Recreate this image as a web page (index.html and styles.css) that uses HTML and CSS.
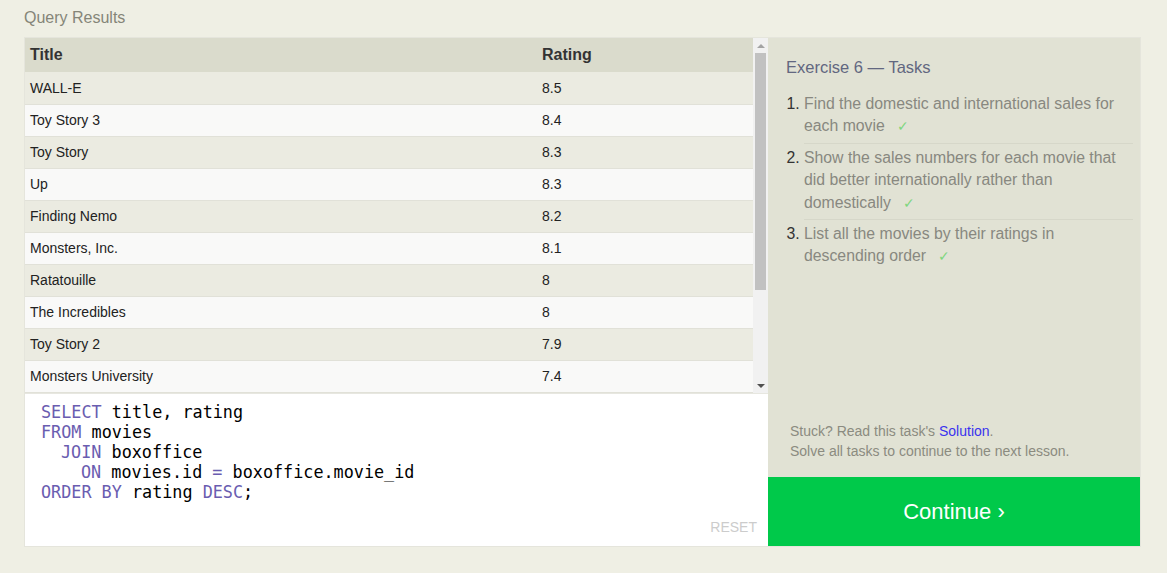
FILE: index.html
```html
<!DOCTYPE html>
<html>
<head>
<meta charset="utf-8">
<link rel="stylesheet" href="styles.css">
</head>
<body>
<div class="page">
  <div class="caption">Query Results</div>
  <div class="box">
    <div class="left">
      <div class="results">
        <div class="table-wrap">
          <table class="tbl">
            <thead><tr><th class="c1">Title</th><th>Rating</th></tr></thead>
            <tbody>
              <tr><td>WALL-E</td><td>8.5</td></tr>
              <tr><td>Toy Story 3</td><td>8.4</td></tr>
              <tr><td>Toy Story</td><td>8.3</td></tr>
              <tr><td>Up</td><td>8.3</td></tr>
              <tr><td>Finding Nemo</td><td>8.2</td></tr>
              <tr><td>Monsters, Inc.</td><td>8.1</td></tr>
              <tr><td>Ratatouille</td><td>8</td></tr>
              <tr><td>The Incredibles</td><td>8</td></tr>
              <tr><td>Toy Story 2</td><td>7.9</td></tr>
              <tr><td>Monsters University</td><td>7.4</td></tr>
              <tr><td>Cars</td><td>7.3</td></tr>
              <tr><td>A Bug's Life</td><td>7.2</td></tr>
              <tr><td>Brave</td><td>7.2</td></tr>
              <tr><td>Cars 2</td><td>6.4</td></tr>
            </tbody>
          </table>
        </div>
        <div class="scrollbar">
          <div class="arrow up"></div>
          <div class="track"><div class="thumb"></div></div>
          <div class="arrow down"></div>
        </div>
      </div>
      <div class="editor">
        <div class="code">
          <div class="ln"><span class="kw">SELECT</span> title, rating</div>
          <div class="ln"><span class="kw">FROM</span> movies</div>
          <div class="ln ind1"><span class="kw">JOIN</span> boxoffice</div>
          <div class="ln ind2"><span class="kw">ON</span> movies.id <span class="kw">=</span> boxoffice.movie_id</div>
          <div class="ln"><span class="kw">ORDER BY</span> rating <span class="kw">DESC</span>;</div>
        </div>
        <div class="reset">RESET</div>
      </div>
    </div>
    <div class="right">
      <div class="tasks">
        <h2 class="heading">Exercise 6 — Tasks</h2>
        <ol class="list">
          <li>Find the domestic and international sales for each movie <span class="check">✓</span></li>
          <li>Show the sales numbers for each movie that did better internationally rather than domestically <span class="check">✓</span></li>
          <li class="last">List all the movies by their ratings in descending order <span class="check">✓</span></li>
        </ol>
      </div>
      <div class="help">
        <div>Stuck? Read this task's <span class="link">Solution</span>.</div>
        <div>Solve all tasks to continue to the next lesson.</div>
      </div>
      <div class="continue">Continue ›</div>
    </div>
  </div>
</div>
</body>
</html>
```

FILE: styles.css
```css
html, body {
  margin: 0;
  padding: 0;
  background: #efefe4;
}
body {
  font-family: "Liberation Sans", Arial, sans-serif;
  color: #333;
}
.page {
  padding: 8px 0 0 24px;
  width: 1117px;
}
.caption {
  font-size: 16px;
  color: #858578;
  line-height: 20px;
  height: 29px;
}
.box {
  display: flex;
  border: 1px solid #e5e5dc;
  height: 508px;
}
.left {
  width: 743px;
  display: flex;
  flex-direction: column;
}
.results {
  display: flex;
  height: 355px;
  overflow: hidden;
}
.table-wrap {
  flex: 1;
  overflow: hidden;
}
.tbl {
  width: 100%;
  border-collapse: collapse;
  font-size: 14px;
}
.tbl th {
  background: #dadbcc;
  text-align: left;
  font-size: 16px;
  font-weight: bold;
  color: #333;
  height: 34px;
  padding: 0 5px;
  box-sizing: border-box;
}
.tbl th.c1 {
  width: 512px;
}
.tbl td {
  height: 32px;
  box-sizing: border-box;
  padding: 0 5px;
  border-bottom: 1px solid #e1e1d8;
  color: #222;
}
.tbl tbody tr:nth-child(odd) td {
  background: #ebebe1;
}
.tbl tbody tr:nth-child(even) td {
  background: #f9f9f8;
}
.scrollbar {
  width: 15px;
  background: #f1f1f1;
  display: flex;
  flex-direction: column;
}
.arrow {
  height: 15px;
  display: flex;
  align-items: center;
  justify-content: center;
}
.arrow::before {
  content: "";
  width: 0;
  height: 0;
  border-left: 4px solid transparent;
  border-right: 4px solid transparent;
}
.arrow.up::before {
  border-bottom: 4px solid #a3a3a3;
}
.arrow.down::before {
  border-top: 4px solid #505050;
}
.track {
  flex: 1;
  padding: 0 2px;
}
.thumb {
  height: 237px;
  background: #c1c1c1;
}
.editor {
  flex: 1;
  background: #fff;
  position: relative;
  border-top: 1px solid #e7e7e0;
}
.code {
  padding: 8px 0 0 16px;
  font-family: "DejaVu Sans Mono", monospace;
  font-size: 16.8px;
  line-height: 20px;
  color: #000;
}
.ln {
  white-space: pre;
  height: 20px;
}
.ind1 {
  padding-left: 20px;
}
.ind2 {
  padding-left: 40px;
}
.kw {
  color: #6a5db0;
}
.reset {
  position: absolute;
  right: 11px;
  bottom: 11px;
  font-size: 14px;
  color: #cccccc;
}
.right {
  width: 372px;
  background: #e1e2d4;
  display: flex;
  flex-direction: column;
}
.tasks {
  flex: 1;
  padding: 19px 7px 0 18px;
}
.heading {
  margin: 0;
  font-size: 16.5px;
  font-weight: normal;
  color: #626780;
  line-height: 20px;
}
.list {
  margin: 13px 0 0 0;
  padding: 0 0 0 18px;
  font-size: 15.8px;
  line-height: 22.4px;
  color: #888880;
}
.list li {
  padding: 3px 0 5px 0;
  border-bottom: 1px solid #d6d7c9;
}
.list li::marker {
  color: #333;
}
.list li.last {
  border-bottom: none;
}
.check {
  color: #7ed67e;
  font-size: 14px;
  margin-left: 8px;
}
.help {
  padding: 0 0 16px 22px;
  font-size: 14px;
  line-height: 20px;
  color: #8b8b80;
}
.link {
  color: #3a33ee;
}
.continue {
  height: 69px;
  background: #00c94a;
  color: #fff;
  font-size: 22px;
  display: flex;
  align-items: center;
  justify-content: center;
}
```
